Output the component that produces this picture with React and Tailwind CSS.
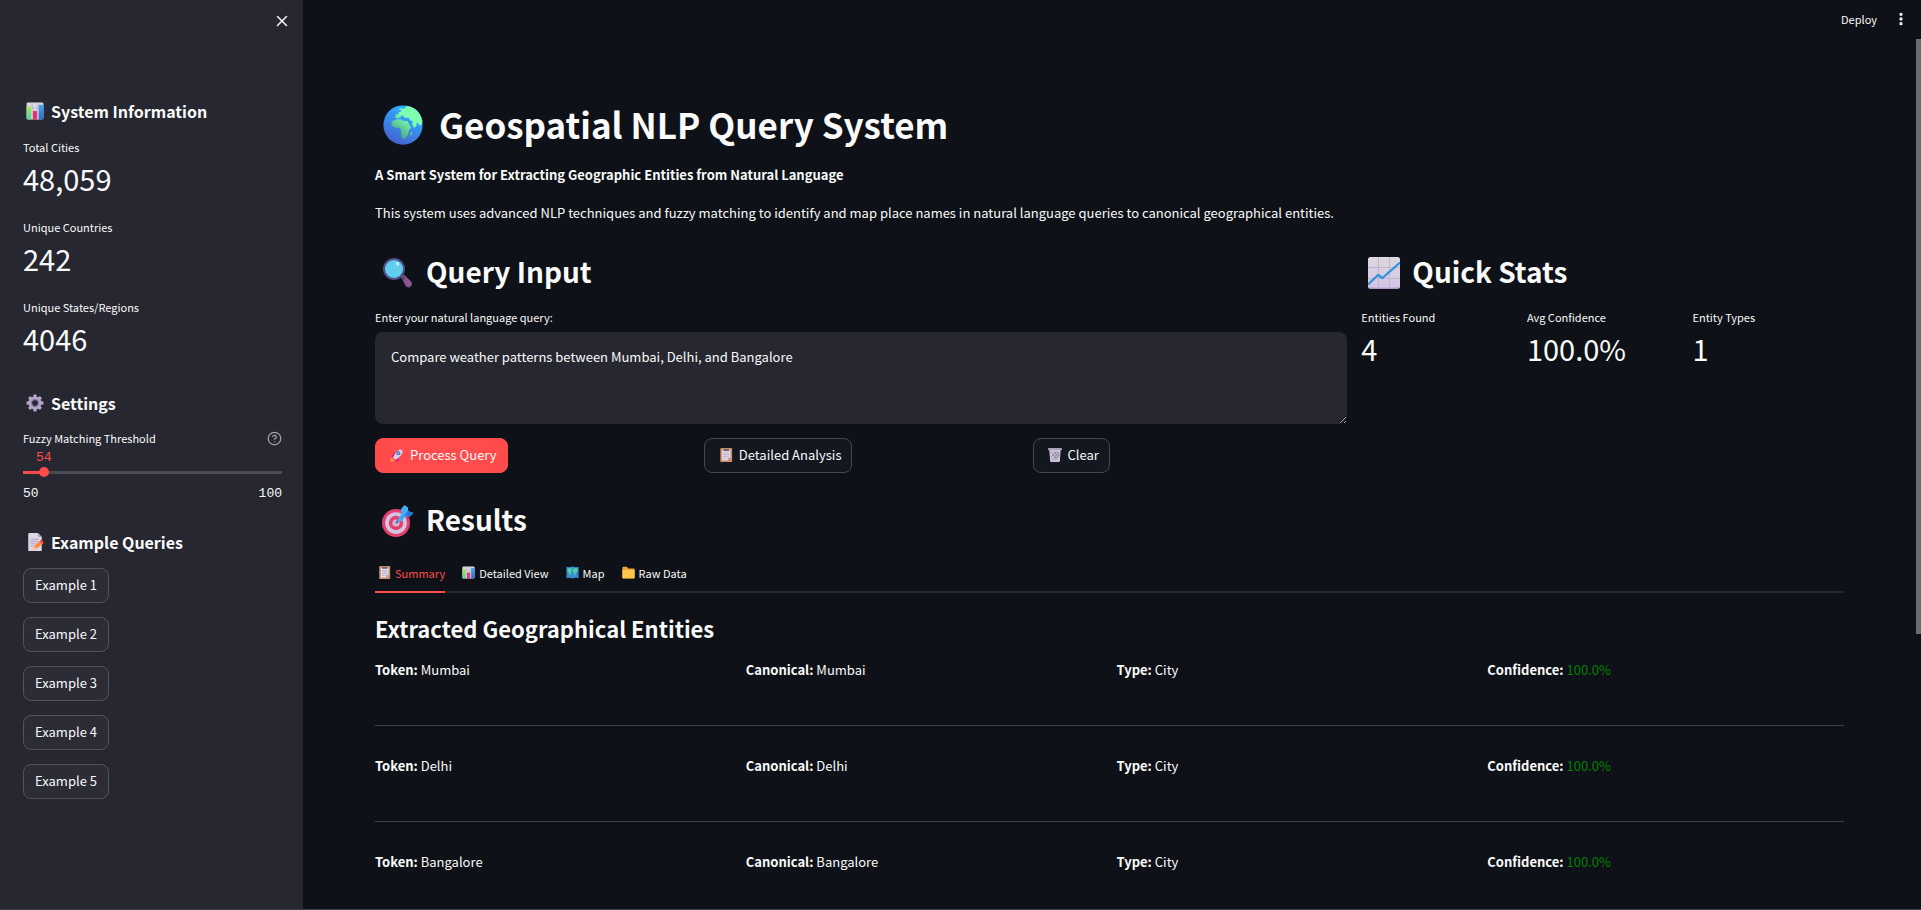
import React from 'react';
import { X, EllipsisVertical, CircleHelp } from 'lucide-react';

function ChartBar({ className }) {
  return (
    <svg viewBox="0 0 32 32" className={className} aria-hidden="true">
      <defs>
        <linearGradient id="barGreen" x1="0" y1="0" x2="0" y2="1"><stop offset="0" stopColor="#a9ea55" /><stop offset="1" stopColor="#4fd3a0" /></linearGradient>
        <linearGradient id="barBlue" x1="0" y1="0" x2="0" y2="1"><stop offset="0" stopColor="#45a8f2" /><stop offset="1" stopColor="#2f68c8" /></linearGradient>
      </defs>
      <rect x="1" y="1" width="30" height="30" rx="2.500" fill="#ddd5e4" />
      <path d="M11 1v30M21 1v30M1 11h30M1 21h30" stroke="#b9aec4" strokeWidth="1.200" />
      <path d="M2 8h7v23H3.500Q1 31 1 28.500V9z" fill="url(#barGreen)" />
      <rect x="12.500" y="16" width="7" height="15" fill="#e8316f" />
      <path d="M22.500 5H31v23.500Q31 31 28.500 31h-6z" fill="url(#barBlue)" />
    </svg>
  );
}

function Gear({ className }) {
  return (
    <svg viewBox="0 0 32 32" className={className} aria-hidden="true">
      <g fill="#b6a6c9">
        <rect x="13" y="1" width="6" height="30" rx="1.500" />
        <rect x="13" y="1" width="6" height="30" rx="1.500" transform="rotate(45 16 16)" />
        <rect x="13" y="1" width="6" height="30" rx="1.500" transform="rotate(90 16 16)" />
        <rect x="13" y="1" width="6" height="30" rx="1.500" transform="rotate(135 16 16)" />
        <circle cx="16" cy="16" r="11.500" />
      </g>
      <circle cx="16" cy="16" r="7.500" fill="#8d7fa3" />
      <circle cx="16" cy="16" r="5" fill="#262730" />
    </svg>
  );
}

function Memo({ className }) {
  return (
    <svg viewBox="0 0 32 32" className={className} aria-hidden="true">
      <path d="M6 0h15l7 7v23.500q0 1.500-1.500 1.500h-21Q4 32 4 30.500V2q0-2 2-2z" fill="#dfd7ea" />
      <path d="M21 0v5.500Q21 7 22.500 7H28z" fill="#b3a6c6" />
      <path d="M8 11h15M8 15h14M8 19h9M8 23h5" stroke="#a598b8" strokeWidth="1.500" />
      <path d="M12 30l2-7 12-10 5 5-12 10z" fill="#ff8a4c" />
      <path d="M24 14.500l2.500-2.500q4.500 1 5 5L29 19.500z" fill="#f0443f" />
      <path d="M12 30l2-7 5 5z" fill="#f7c79a" />
    </svg>
  );
}

function Globe({ className }) {
  return (
    <svg viewBox="0 0 32 32" className={className} aria-hidden="true">
      <defs>
        <linearGradient id="sea" x1="0.700" y1="0.200" x2="0.300" y2="1"><stop offset="0" stopColor="#2eaaff" /><stop offset="1" stopColor="#4560cf" /></linearGradient>
        <linearGradient id="land" gradientUnits="userSpaceOnUse" x1="25" y1="5" x2="11" y2="25"><stop offset="0.300" stopColor="#7dffb0" /><stop offset="1" stopColor="#44a181" /></linearGradient>
      </defs>
      <circle cx="16" cy="16" r="15.700" fill="url(#sea)" />
      <g fill="url(#land)">
        <path d="M12.500 3.500l2.200-.9 2 .6 2.300-2.500Q29 2 31.500 12.500l-.3 2.500-1.800 1.500-1.300-2-1.200-.4-.2 2.500-1.700 1.900-2-3.600 1-1.500-2.500-1.500-1-1.700h-3.500l-.6-1.800-1.700.4-.8 1.200-2.400.7-1.700-.7.2-2.200 2.400-.6.4-1.700 1.500-.2.700-1.300-1.600-.1z" />
        <path d="M8 12.500l3.500-1.200h3l1.500 1.200 3.700.2 1.300 3 1.400 1.800-1.600 2.900-1 3.500-2.200 3.200h-1.800l-1.400-3.200.2-3.400-1.400-2.300-3.800-.2-2.200-1.500-.5-2.300z" />
        <path d="M22.500 21.500l1 .5-1 2.700-1-.7z" />
      </g>
    </svg>
  );
}

function Magnifier({ className }) {
  return (
    <svg viewBox="0 0 32 32" className={className} aria-hidden="true">
      <path d="M19 20l3-2.500 7 7q2 3-.5 5t-4.800-.5z" fill="#8d5690" />
      <path d="M18 19l3-1 3 3-3 3z" fill="#5b4a72" />
      <circle cx="12" cy="12" r="11" fill="#51508b" />
      <circle cx="12" cy="12" r="9" fill="#62cdec" />
      <ellipse cx="15.500" cy="6.800" rx="1.600" ry="2" fill="#b9efff" transform="rotate(-30 15.500 6.800)" />
    </svg>
  );
}

function ChartLine({ className }) {
  return (
    <svg viewBox="0 0 32 32" className={className} aria-hidden="true">
      <defs><linearGradient id="paper" x1="0" y1="0" x2="0" y2="1"><stop offset="0" stopColor="#dcd8df" /><stop offset="0.930" stopColor="#d4c6e6" /><stop offset="1" stopColor="#a78cc4" /></linearGradient></defs>
      <rect x="0" y="0" width="32" height="32" rx="2.500" fill="url(#paper)" />
      <path d="M10.500 0v32M21.500 0v32M0 10.500h32M0 21.500h32" stroke="#beb5c7" strokeWidth="1" />
      <path d="M0 27.500L10 18l4.500 3L32 5.500" fill="none" stroke="#3092da" strokeWidth="2.200" strokeLinejoin="round" />
    </svg>
  );
}

function Rocket({ className }) {
  return (
    <svg viewBox="0 0 32 32" className={className} aria-hidden="true">
      <path d="M1 31l1-10 9 9z" fill="#ff9b45" />
      <path d="M3 19l6-8h9l-9 11zM11 28l10-11v9l-7 7z" fill="#d8277b" />
      <path d="M7 22Q13 4 31 1 29 19 12 27z" fill="#d9d3ec" />
      <path d="M24 3q4-2 7-2 0 4-2 7z" fill="#ef4c7c" />
      <circle cx="19" cy="12" r="4.500" fill="#596fa6" />
      <circle cx="19" cy="12" r="2.200" fill="#64c7f2" />
    </svg>
  );
}

function Clipboard({ className }) {
  return (
    <svg viewBox="0 0 32 32" className={className} aria-hidden="true">
      <rect x="3" y="0" width="27" height="32" rx="2" fill="#cf9163" />
      <path d="M7 4h19v18l-6 6H7z" fill="#e6def0" />
      <path d="M26 22l-6 6v-6z" fill="#a99bbd" />
      <path d="M9 11h14M9 15h14M9 19h14M9 23h8" stroke="#a69ab8" strokeWidth="1.500" />
      <path d="M10 2h13v5H10z" fill="#6f6580" />
    </svg>
  );
}

function Bin({ className }) {
  return (
    <svg viewBox="0 0 32 32" className={className} aria-hidden="true">
      <path d="M3 4h26l-2 26H5z" fill="#d2cbdc" />
      <path d="M6 9l18 20M12 8l14 15M19 8l8 9M25 9L8 28M19 8L6 22M26 14L14 28" stroke="#746c84" strokeWidth="1.600" />
      <rect x="0" y="0" width="32" height="5" rx="1" fill="#aaa0b8" />
      <path d="M5 27h22l-.5 5h-21z" fill="#c9c1d5" />
    </svg>
  );
}

function Target({ className }) {
  return (
    <svg viewBox="0 0 32 32" className={className} aria-hidden="true">
      <circle cx="14" cy="18" r="14" fill="#e3406f" />
      <circle cx="14" cy="18" r="10.800" fill="#d3c6e2" />
      <circle cx="14" cy="18" r="7.200" fill="#e3406f" />
      <circle cx="14" cy="18" r="3.600" fill="#c9bcda" />
      <path d="M14 18l5-5" stroke="#6a5786" strokeWidth="2" />
      <path d="M16 17q-1-4 3.500-8L19 4l3.500-4L26 2.500V6l5.500 2-3.500 3.500-5-.2Q21 17 16 17z" fill="#45aef2" />
      <path d="M25.500 6l6 2-3.500 3.500-5-.2z" fill="#2878dc" />
      <path d="M19 13.500l8-8" stroke="#2a84df" strokeWidth="1" />
    </svg>
  );
}

function WorldMap({ className }) {
  return (
    <svg viewBox="0 0 32 32" className={className} aria-hidden="true">
      <path d="M1 2l7 1 8-2 8 2 7-1v28l-7-1-8 2-8-2-7 1z" fill="#3386c9" />
      <path d="M4 6l8-1 3 4-3 3 2 3-3 4-2 7-2-9-4-5zM18 6l9-1 2 5-2 5-3 2-1 8-4-7-2-6z" fill="#4ed0a0" />
      <path d="M8 3v26M16 2v28M24 3v26" stroke="#68b4e6" strokeWidth="0.800" />
    </svg>
  );
}

function Folder({ className }) {
  return (
    <svg viewBox="0 0 32 32" className={className} aria-hidden="true">
      <path d="M1 4q0-2 2-2h9l4 4h13q2 0 2 2v20q0 2-2 2H3q-2 0-2-2z" fill="#eaa23b" />
      <rect x="1" y="9" width="30" height="22" rx="2" fill="#ffc64b" />
    </svg>
  );
}

const fontStack = "font-['Noto_Sans_CJK_SC','Noto_Sans',sans-serif]";
const mutedButton = 'flex h-[35px] items-center rounded-lg border pb-px text-[13px] leading-5 whitespace-nowrap';

function Metric({ label, value }) {
  return (
    <div>
      <dt className="text-[11px] leading-[18px]">{label}</dt>
      <dd className="text-[29px] leading-[44px]">{value}</dd>
    </div>
  );
}

function SidebarHeading({ icon: Icon, children }) {
  return (
    <h2 className="flex items-center gap-[7px] pl-[3px] text-base leading-[22px] font-semibold">
      <Icon className="size-[18px]" />
      {children}
    </h2>
  );
}

function SectionHeading({ icon: Icon, children }) {
  return (
    <h2 className="flex h-[39px] items-center gap-3 pl-[7px] text-[28px] leading-[36px] font-semibold">
      <Icon className="size-8" />
      <span className="pb-[3px]">{children}</span>
    </h2>
  );
}

function Sidebar() {
  return (
    <aside className="flex h-full w-[303px] shrink-0 flex-col bg-[#262730] pr-[21px] pl-[23px]">
      <div className="-mr-[9px] flex h-[100px] justify-end pt-3">
        <button aria-label="Close sidebar" className="size-[18px]"><X size={18} strokeWidth={2} /></button>
      </div>
      <SidebarHeading icon={ChartBar}>System Information</SidebarHeading>
      <dl className="mt-4 flex flex-col gap-[18px]">
        <Metric label="Total Cities" value="48,059" />
        <Metric label="Unique Countries" value="242" />
        <Metric label="Unique States/Regions" value="4046" />
      </dl>
      <div className="mt-8"><SidebarHeading icon={Gear}>Settings</SidebarHeading></div>
      <div className="mt-[14px] flex h-5 items-center justify-between">
        <label htmlFor="threshold" className="text-[11px] leading-5">Fuzzy Matching Threshold</label>
        <button aria-label="Help" className="text-[#a3a4aa]"><CircleHelp size={15} strokeWidth={2} /></button>
      </div>
      <output htmlFor="threshold" className="mt-[2px] ml-[13px] text-[13px] leading-4 text-[#ff4b4b] font-['Liberation_Mono',monospace]">54</output>
      <input
        id="threshold"
        type="range"
        min="50"
        max="100"
        defaultValue="54"
        className="-mx-[5px] h-3 appearance-none bg-[linear-gradient(to_right,#ff4b4b_8%,#4a4b55_8%)] bg-[length:calc(100%-10px)_3px] bg-center bg-no-repeat [&::-webkit-slider-thumb]:size-[10px] [&::-webkit-slider-thumb]:appearance-none [&::-webkit-slider-thumb]:rounded-full [&::-webkit-slider-thumb]:bg-[#ff4b4b]"
      />
      <div className="mt-[6px] flex justify-between text-[13px] leading-5 font-['Liberation_Mono',monospace]">
        <span>50</span>
        <span>100</span>
      </div>
      <div className="mt-[27px]"><SidebarHeading icon={Memo}>Example Queries</SidebarHeading></div>
      <div className="mt-[15px] flex flex-col items-start gap-[14px]">
        {[1, 2, 3, 4, 5].map((n) => (
          <button key={n} className={`${mutedButton} border-[#51525a] bg-[#2b2c36] px-[11px]`}>Example {n}</button>
        ))}
      </div>
    </aside>
  );
}

const tabs = [
  { label: 'Summary', icon: Clipboard, active: true },
  { label: 'Detailed View', icon: ChartBar },
  { label: 'Map', icon: WorldMap },
  { label: 'Raw Data', icon: Folder },
];

const entities = ['Mumbai', 'Delhi', 'Bangalore'];

function EntityRow({ name }) {
  return (
    <li className="grid h-24 grid-cols-4 gap-[14px] border-b border-[#3e4045] pt-[29px] text-[13px] leading-[22px]">
      <p><strong className="font-semibold">Token:</strong> {name}</p>
      <p><strong className="font-semibold">Canonical:</strong> {name}</p>
      <p><strong className="font-semibold">Type:</strong> City</p>
      <p><strong className="font-semibold">Confidence:</strong> <span className="text-[#008000]">100.0%</span></p>
    </li>
  );
}

export default function App() {
  return (
    <div className={`relative flex h-screen overflow-hidden border-b border-[#3f4046] bg-[#0e1117] text-[#fafafa] ${fontStack}`}>
      <Sidebar />
      <div className="relative min-w-0 flex-1">
        <header className="absolute top-0 right-0 flex h-[38px] items-center gap-4 pr-3">
          <button className="text-[11px] leading-5">Deploy</button>
          <button aria-label="Main menu"><EllipsisVertical size={16} strokeWidth={3} /></button>
        </header>
        <main className="h-full overflow-hidden pt-[101px] pr-[77px] pl-[72px]">
          <h1 className="flex h-12 items-center gap-4 pl-[8px] text-[35px] leading-[44px] font-bold">
            <Globe className="size-10" />
            <span className="pb-[3px]">Geospatial NLP Query System</span>
          </h1>
          <p className="mt-[15px] text-[13px] leading-[22px] font-semibold">A Smart System for Extracting Geographic Entities from Natural Language</p>
          <p className="mt-4 text-[13px] leading-[22px]">This system uses advanced NLP techniques and fuzzy matching to identify and map place names in natural language queries to canonical geographical entities.</p>

          <div className="mt-[29px] flex gap-[14px]">
            <section className="w-[calc(200%/3-7px)] shrink-0">
              <SectionHeading icon={Magnifier}>Query Input</SectionHeading>
              <label htmlFor="query" className="mt-4 block text-[11px] leading-[18px]">Enter your natural language query:</label>
              <textarea
                id="query"
                defaultValue="Compare weather patterns between Mumbai, Delhi, and Bangalore"
                className="mt-[6px] block h-[92px] w-full rounded-lg bg-[#262730] px-4 py-[14px] text-[13px] leading-[22px]"
              />
              <div className="mt-[14px] grid grid-cols-3 items-start justify-items-start gap-[14px]">
                <button className={`${mutedButton} gap-[6px] border-[#ff4b4b] bg-[#ff4b4b] pr-[10px] pl-[14px]`}><Rocket className="size-[14px]" />Process Query</button>
                <button className={`${mutedButton} gap-[6px] border-[#464851] bg-[#131720] pr-[10px] pl-[14px]`}><Clipboard className="size-[14px]" />Detailed Analysis</button>
                <button className={`${mutedButton} gap-[6px] border-[#464851] bg-[#131720] pr-[10px] pl-[14px]`}><Bin className="size-[14px]" />Clear</button>
              </div>
            </section>
            <section className="min-w-0 flex-1">
              <SectionHeading icon={ChartLine}>Quick Stats</SectionHeading>
              <dl className="mt-4 grid grid-cols-3 gap-[14px]">
                <Metric label="Entities Found" value="4" />
                <Metric label="Avg Confidence" value="100.0%" />
                <Metric label="Entity Types" value="1" />
              </dl>
            </section>
          </div>

          <section className="mt-[28px]">
            <SectionHeading icon={Target}>Results</SectionHeading>
            <div role="tablist" className="mt-[17px] flex h-9 gap-[14px] border-b-2 border-[#262730]">
              {tabs.map(({ label, icon: Icon, active }) => (
                <button
                  key={label}
                  role="tab"
                  aria-selected={Boolean(active)}
                  className={`-mb-[2px] flex items-start gap-1 border-b-2 pt-[6px] pl-[3px] text-[11px] leading-5 ${active ? 'border-[#ff4b4b] text-[#ff4b4b]' : 'border-transparent'}`}
                >
                  <Icon className="mt-[3px] size-[13px]" />
                  {label}
                </button>
              ))}
            </div>
            <h3 className="mt-5 text-[22px] leading-[30px] font-semibold">Extracted Geographical Entities</h3>
            <ul className="-mt-[13px]">
              {entities.map((name) => <EntityRow key={name} name={name} />)}
            </ul>
          </section>
        </main>
        <div aria-hidden="true" className="absolute top-[39px] right-0 h-[595px] w-[5px] bg-[#6b6b6b]" />
      </div>
    </div>
  );
}
